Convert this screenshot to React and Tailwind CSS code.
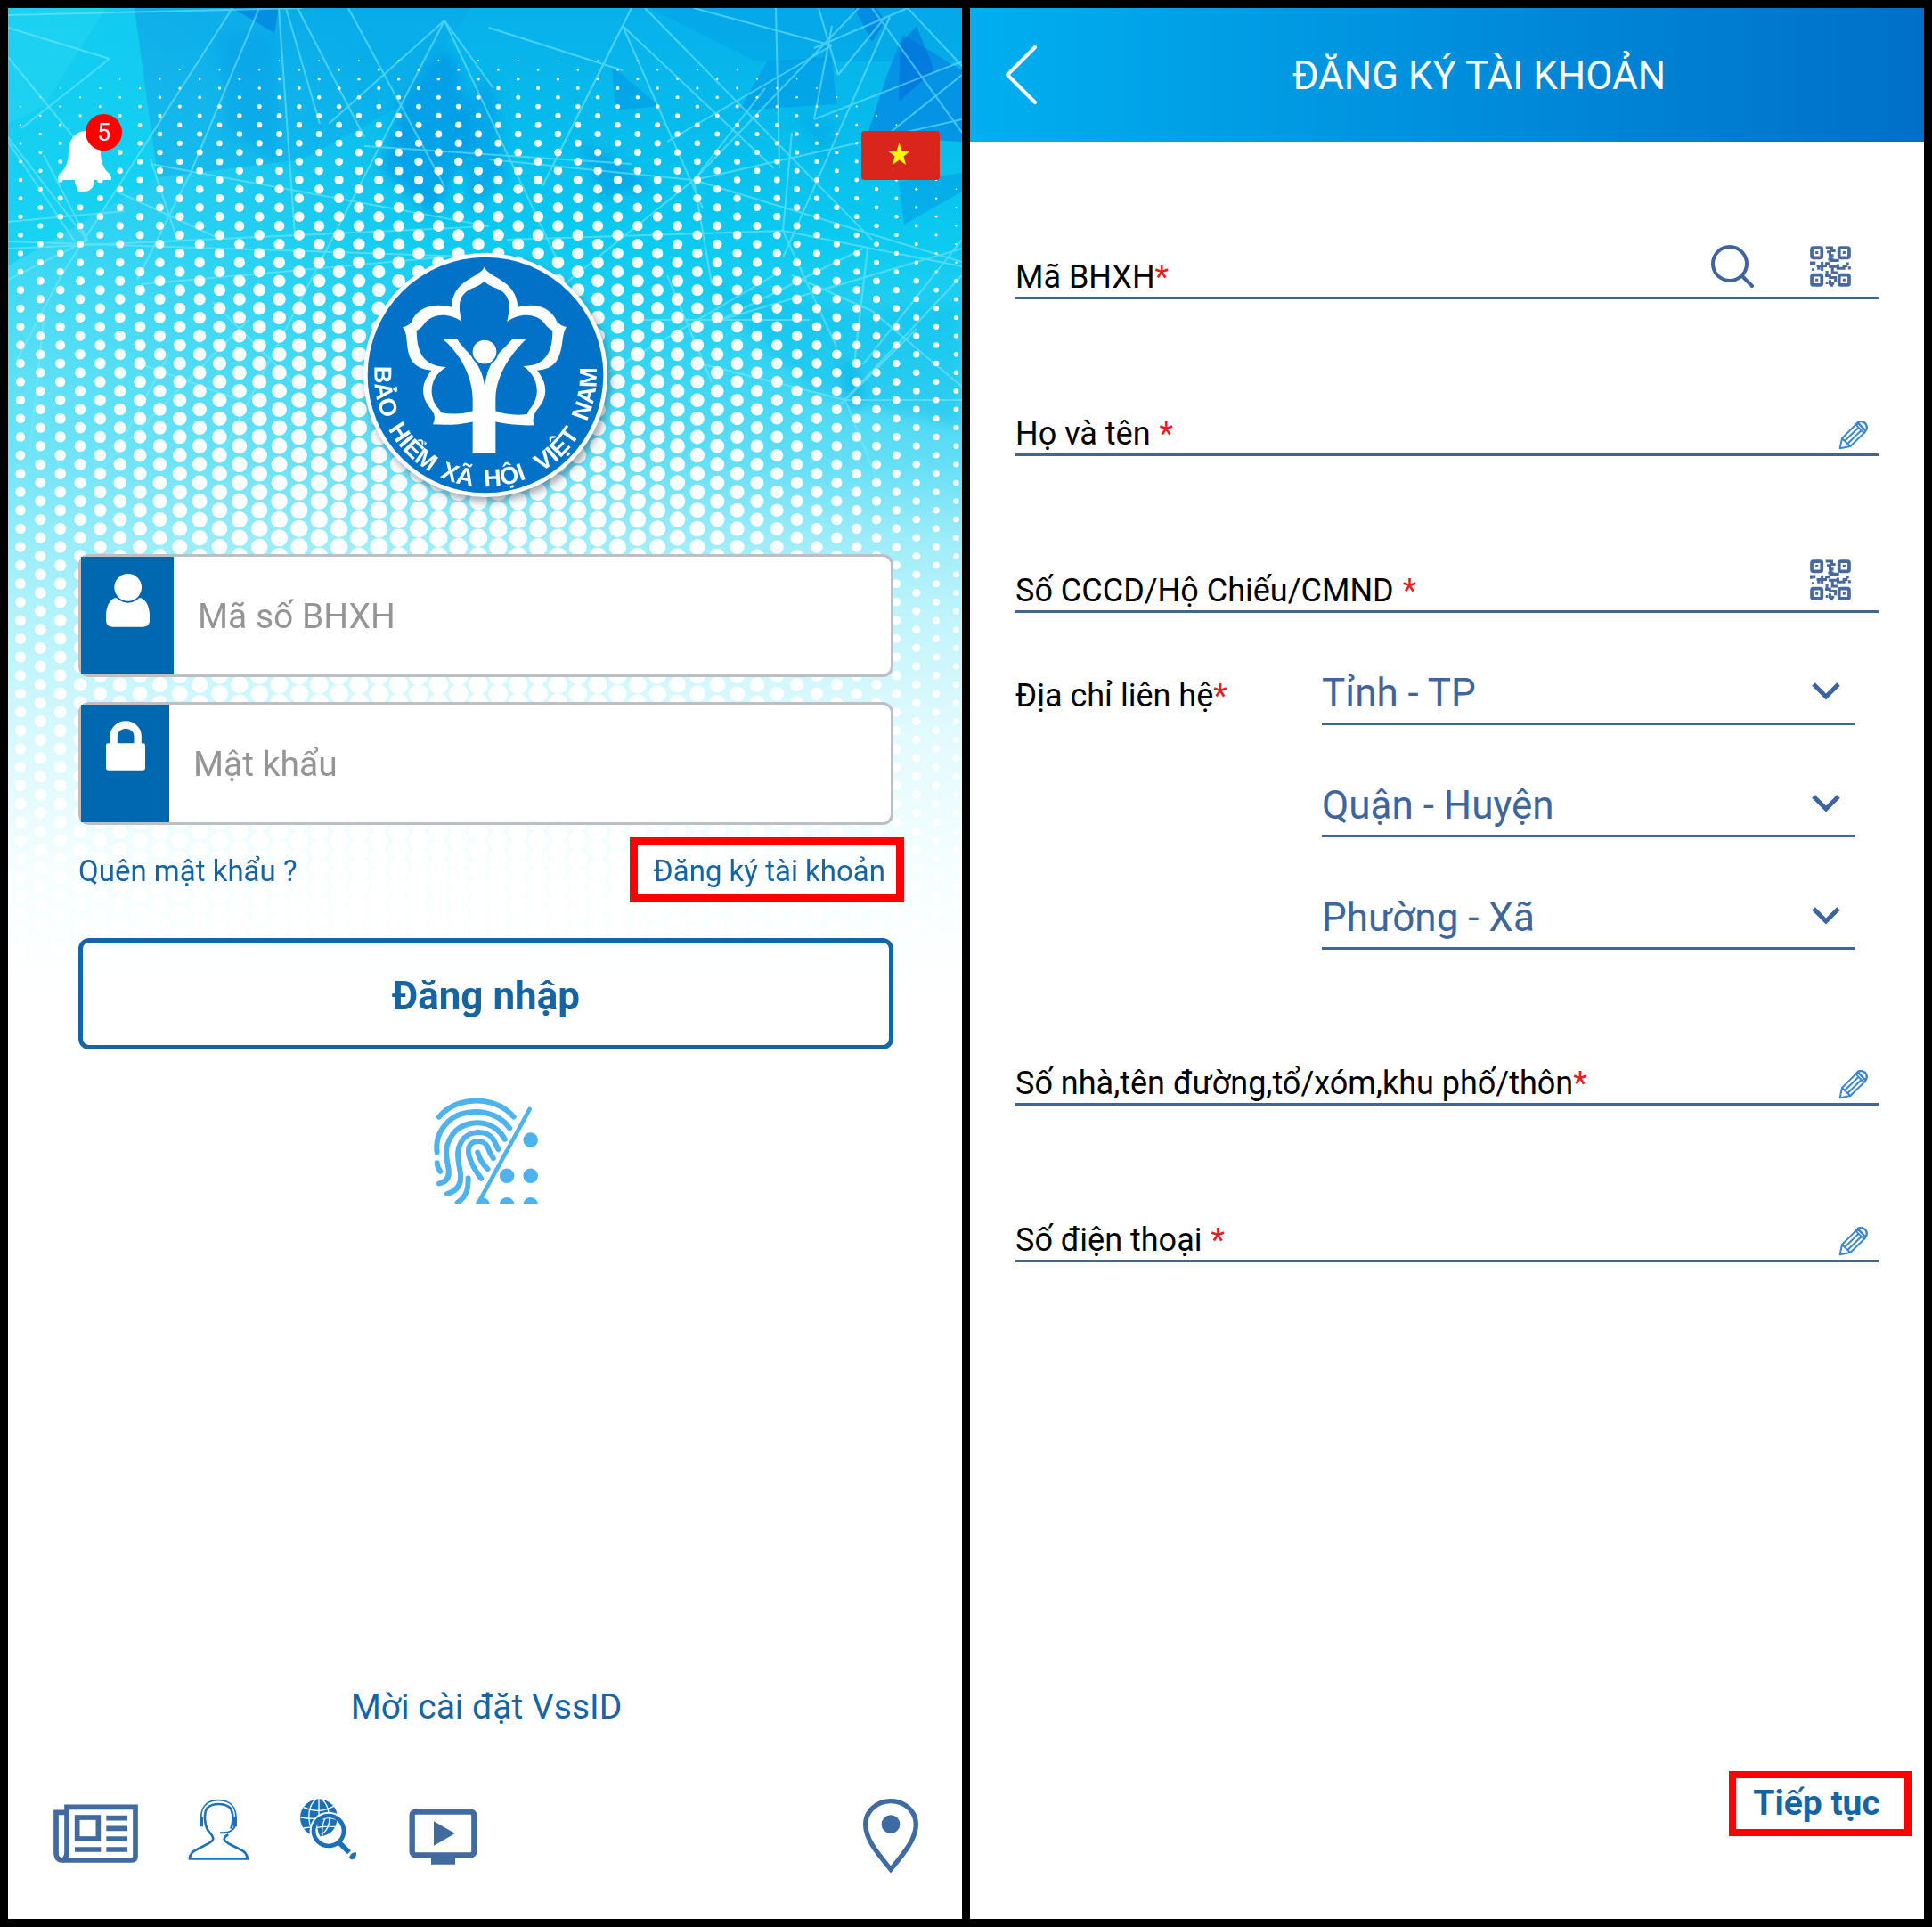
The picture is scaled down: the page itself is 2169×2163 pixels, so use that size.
const dotRadius = (x, y) => {
  const base = 11.6 * (1 - Math.exp(-(y - 36) / 260));
  const d = (x - 510) / 530;
  const side = d < 0 ? 0.5 : 0.62;
  return base * (1 - side * d * d) - 0.9 * d * d * (y < 300 ? 1 : 0);
};

const dots = [];
for (let c = 0; c < 48; c += 1) {
  for (let r = 0; r < 52; r += 1) {
    const x = 14 + c * 22.35;
    const y = 7.6 + r * 20.6 + (c % 2 ? -10.3 : 0);
    const radius = dotRadius(x, y);
    if (radius > 0.7) dots.push([x, y, Math.round(radius * 10) / 10]);
  }
}

const softShards = [
  ["485,45 505,60 520,150 478,235 418,180 443,100", "#0088e4", 0.5],
  ["536,75 545,90 560,190 520,230 505,120", "#0090e4", 0.45],
  ["235,25 299,28 304,170 248,140", "#0090e4", 0.35],
  ["640,150 685,170 724,200 668,215", "#0088e2", 0.4],
  ["880,110 930,130 920,180", "#009ae6", 0.35],
  ["932,395 952,400 964,440 945,455", "#00a8e4", 0.5],
  ["780,310 960,340 1071,330 1071,470 900,430", "#00b8ea", 0.35],
];

const shards = [
  ["0,0 142,0 168,190 0,290", "#10d2f1", 0.75],
  ["0,0 110,0 40,110 0,130", "#2ad8f2", 0.45],
  ["142,0 520,0 440,110 330,170 168,190", "#0aa6e8", 0.4],
  ["252,0 304,0 299,28", "#0082e0", 0.7],
  ["678,65 731,110 682,115", "#008ae2", 0.4],
  ["852,60 925,55 930,108 821,115", "#008ee6", 0.45],
  ["720,0 1071,0 1071,60 840,60", "#0098e6", 0.35],
  ["950,0 975,0 985,15 970,38", "#0070dc", 0.5],
  ["1005,30 1071,70 1071,150 964,144 988,72", "#0480e2", 0.65],
  ["1002,40 1020,20 1040,70 1000,105", "#0068d8", 0.5],
  ["1000,195 1071,185 1071,206 1006,243", "#0098e4", 0.5],
];

const rays = [
  [0, 22, 114, 57], [114, 57, 15, 135], [0, 55, 82, 155], [0, 8, 330, 0], [0, 150, 75, 262], [0, 145, 90, 262],
  [252, 0, 60, 300], [60, 300, 10, 395], [282, 0, 205, 185], [205, 185, 145, 305], [304, 0, 322, 255], [312, 0, 350, 130],
  [325, 0, 400, 145], [382, 0, 490, 200], [490, 14, 360, 130], [490, 14, 240, 500], [490, 14, 545, 90], [490, 14, 620, 290],
  [0, 270, 540, 245], [0, 262, 550, 280], [0, 305, 90, 260], [150, 310, 540, 275], [160, 175, 540, 245], [120, 205, 240, 260],
  [160, 170, 190, 260], [0, 240, 130, 228], [40, 165, 90, 262], [400, 155, 700, 175], [540, 22, 690, 70], [690, 20, 600, 200],
  [690, 20, 780, 225], [690, 20, 860, 180], [715, 0, 970, 260], [700, 0, 620, 160], [770, 0, 925, 42], [925, 42, 740, 150],
  [862, 0, 866, 180], [910, 0, 932, 75], [932, 75, 985, 10], [990, 10, 870, 280], [925, 20, 905, 125], [1010, 0, 905, 45],
  [1010, 0, 1071, 65], [970, 0, 1071, 140], [905, 125, 1071, 60], [1071, 75, 990, 140], [770, 193, 540, 170], [770, 193, 600, 330],
  [770, 193, 1071, 285], [770, 193, 955, 0], [770, 193, 790, 310], [770, 193, 1071, 125], [770, 193, 850, 90], [560, 260, 870, 250],
  [870, 250, 930, 380], [870, 250, 1071, 290], [880, 140, 870, 250], [960, 270, 800, 350], [965, 270, 950, 400], [1071, 260, 960, 400],
  [1071, 300, 930, 450], [800, 350, 1071, 270], [880, 300, 970, 340], [970, 340, 1071, 425], [1020, 360, 940, 440], [940, 440, 1071, 440],
  [780, 400, 940, 440], [740, 300, 790, 420], [620, 440, 860, 300], [700, 350, 900, 350], [940, 440, 980, 540], [180, 390, 120, 500],
  [230, 330, 320, 420], [150, 400, 260, 440], [270, 350, 60, 560], [40, 350, 20, 540],
];

function Backdrop() {
  return (
    <svg className="absolute inset-x-0 top-0 h-auto w-full" viewBox="0 0 1071 1100" aria-hidden="true">
      <defs>
        <linearGradient id="sky" x1="0" y1="0" x2="0" y2="1">
          <stop offset="0" stopColor="#08b0ea" />
          <stop offset="0.12" stopColor="#06bcec" />
          <stop offset="0.24" stopColor="#0ccaf0" />
          <stop offset="0.36" stopColor="#34d4f2" />
          <stop offset="0.46" stopColor="#62def5" />
          <stop offset="0.54" stopColor="#9cecf9" />
          <stop offset="0.62" stopColor="#c0f4fc" />
          <stop offset="0.74" stopColor="#e2fafe" />
          <stop offset="0.88" stopColor="#f6feff" />
          <stop offset="1" stopColor="#ffffff" />
        </linearGradient>
        <radialGradient id="glow" cx="0" cy="0.38" r="0.5">
          <stop offset="0" stopColor="#8aeefa" stopOpacity="0.45" />
          <stop offset="1" stopColor="#8aeefa" stopOpacity="0" />
        </radialGradient>
        <filter id="soften">
          <feGaussianBlur stdDeviation="7" />
        </filter>
      </defs>
      <rect width="1071" height="1100" fill="url(#sky)" />
      <rect width="1071" height="1100" fill="url(#glow)" />
      <g filter="url(#soften)">
        {softShards.map(([points, fill, opacity]) => (
          <polygon key={points} points={points} fill={fill} opacity={opacity} />
        ))}
      </g>
      {shards.map(([points, fill, opacity]) => (
        <polygon key={points} points={points} fill={fill} opacity={opacity} />
      ))}
      <g stroke="#7cecfc" strokeWidth="2" opacity="0.55">
        {rays.map(([x1, y1, x2, y2], i) => (
          <line key={i} x1={x1} y1={y1} x2={x2} y2={y2} />
        ))}
      </g>
      <g fill="#ffffff" opacity="0.95">
        {dots.map(([x, y, r], i) => (
          <circle key={i} cx={x} cy={y} r={r} />
        ))}
      </g>
    </svg>
  );
}

const mottoWords = [
  ["BẢO", "9.6%"],
  ["HIỂM", "27.3%"],
  ["XÃ", "42.3%"],
  ["HỘI", "55.3%"],
  ["VIỆT", "72%"],
  ["NAM", "89.8%"],
];

function Emblem() {
  return (
    <svg
      className="relative mx-auto mt-[67px] size-[276px] drop-shadow-[3px_5px_4px_rgba(60,60,80,0.45)]"
      viewBox="54 67 828 828"
      role="img"
      aria-label="Bảo hiểm xã hội Việt Nam"
    >
      <circle cx="468" cy="481" r="411" fill="#fff" />
      <circle cx="468" cy="481" r="397" fill="#0272c8" />
      <path
        fill="#fff"
        d="M464 117C476 152 574 160 577 252C625 238 688 246 710 303Q724 316 741 320C722 346 734 392 706 436Q684 463 642 465C672 502 686 550 640 600Q624 622 631 650Q560 652 500 638L464 620L428 638Q368 652 291 647Q304 622 288 600C242 550 256 502 286 465Q244 463 222 436C194 392 212 346 189 320Q208 316 218 303C240 246 303 238 355 252C354 160 452 152 464 117Z"
      />
      <path
        fill="#0272c8"
        d="M464 165Q478 180 508 190C562 215 548 262 541 301C590 266 648 276 671 312Q680 324 694 332C694 372 690 452 595 451C650 488 652 552 622 590Q612 600 609 613Q550 620 502 602L464 590L425 602Q380 618 319 608Q316 600 306 590C276 552 278 488 336 454C238 452 238 372 236 332Q250 324 259 312C282 276 338 266 387 300C380 262 368 215 420 190Q450 180 464 165Z"
      />
      <path
        fill="#fff"
        d="M325 360L372 358C392 398 456 430 466 522C474 430 520 406 560 359L605 360C566 398 504 470 502 560V745H425V560C424 480 378 404 325 360Z"
      />
      <circle cx="465" cy="403" r="46" fill="#0272c8" />
      <circle cx="465" cy="403" r="40" fill="#fff" />
      <path id="motto" fill="none" d="M100 416A374 374 0 1 0 836 416" />
      {mottoWords.map(([word, offset]) => (
        <text key={word} className="font-['Liberation_Sans'] font-bold" fontSize="82" fill="#fff" textAnchor="middle">
          <textPath href="#motto" startOffset={offset}>
            {word}
          </textPath>
        </text>
      ))}
    </svg>
  );
}

function BellIcon() {
  return (
    <svg className="mt-[18px] h-[68px] w-[60px]" viewBox="0 0 60 68" fill="#fff" aria-hidden="true">
      <path d="M30 0C18 1 12 12 12 22C12 38 7 44 2 48Q0 50 0 55H19C19 63 24 68 30 68C36 68 41 63 41 55H60Q60 50 58 48C53 44 48 38 48 22C48 12 42 1 30 0Z" />
    </svg>
  );
}

function FlagIcon() {
  return (
    <svg className="mt-1 h-[55px] w-[88px]" viewBox="0 0 88 55" aria-hidden="true">
      <rect width="88" height="55" rx="4" fill="#da251d" />
      <path fill="#ff0" d="M42.500 13L45.500 22.500H55L47.500 28.500L50 38L42.500 32.500L35 38L37.500 28.500L30 22.500H39.500Z" />
    </svg>
  );
}

function UserIcon() {
  return (
    <svg className="h-[61px] w-[51px]" viewBox="174 130 153 183" fill="#fff" aria-hidden="true">
      <path d="M177 272C178 246 188 222 206 215H295C313 222 323 246 324 272V290Q324 312 302 312H199Q177 312 177 290Z" />
      <circle cx="251" cy="180" r="51" fill="#0068b0" />
      <circle cx="251" cy="179" r="46" />
    </svg>
  );
}

function LockIcon() {
  return (
    <svg className="h-14 w-[46px]" viewBox="174 628 138 168" aria-hidden="true">
      <rect x="177" y="704" width="132" height="91" rx="7" fill="#fff" />
      <path d="M203 710V680A40 38 0 0 1 284 680V710" fill="none" stroke="#fff" strokeWidth="25" />
    </svg>
  );
}

function FingerprintIcon() {
  return (
    <svg className="h-[119px] w-[118px]" viewBox="80 66 355 356" fill="none" stroke="#4eb3ec" strokeWidth="18" strokeLinecap="round" aria-hidden="true">
      <path d="M98 130C155 60 285 55 350 130" />
      <path d="M91 250C82 185 130 114 218 113C275 112 315 138 336 168" />
      <path d="M98 355C126 350 133 332 130 308C124 268 114 238 136 202C164 148 240 134 290 170Q310 186 320 206" />
      <path d="M125 390C162 380 174 355 170 320C164 282 154 252 170 220C192 172 262 172 282 208L298 240" />
      <path d="M240 338C218 308 197 275 197 243C199 206 248 204 261 230Q270 254 281 270" />
      <path d="M228 250Q240 286 262 306" />
      <path d="M91 285Q92 302 102 314" />
      <path d="M196 337C198 372 190 402 160 420" />
      <path d="M404 104L232 418" strokeWidth="14" />
      <g fill="#4eb3ec" stroke="none">
        <circle cx="407" cy="208" r="25" />
        <circle cx="327" cy="329" r="25" />
        <circle cx="407" cy="329" r="25" />
        <circle cx="245" cy="427" r="24" />
        <circle cx="327" cy="427" r="25" />
        <circle cx="407" cy="427" r="25" />
      </g>
    </svg>
  );
}

function NewsIcon() {
  return (
    <svg className="h-[84px] w-[95px]" viewBox="60 84 285 252" fill="none" stroke="#416a9f" strokeWidth="17" aria-hidden="true">
      <path d="M105 115H336V282Q336 294 322 294H90Q105 290 105 270Z" />
      <path d="M105 133H69V272Q70 294 90 294Q105 290 105 270" />
      <rect x="140" y="150" width="71" height="72" />
      <path d="M238 152H309M238 187H309M238 222H309M238 258H309M132 258H220" />
    </svg>
  );
}

function SupportIcon() {
  return (
    <svg className="h-[84px] w-[69px]" viewBox="510 84 207 252" fill="none" stroke="#1d73b9" strokeWidth="8" aria-hidden="true">
      <path d="M655 188C664 165 664 135 652 118Q638 105 613 105Q588 105 575 118C562 135 565 180 582 200Q594 212 595 222C593 236 560 246 540 258Q516 268 516 289H710Q710 268 686 258C666 246 636 238 632 224Q633 214 646 208" />
      <path d="M554 152C554 110 578 92 613 92C648 92 672 110 672 152" strokeWidth="5" />
      <path d="M555 148V181M669 148V181" strokeWidth="12" />
      <path d="M669 178C662 196 648 203 618 202" strokeWidth="6" />
    </svg>
  );
}

function GlobeSearchIcon() {
  return (
    <svg className="h-[84px] w-[67px]" viewBox="888 84 201 252" fill="none" aria-hidden="true">
      <circle cx="954" cy="151" r="63" fill="#1a6fb9" />
      <g stroke="#fff" strokeWidth="4">
        <path d="M954 88V214M892 150Q954 162 1016 140M903 116Q954 140 1004 112M902 186Q950 178 1000 190" />
        <path d="M944 88C910 120 914 184 948 214M964 88C998 120 994 184 960 214" />
      </g>
      <circle cx="987" cy="195" r="64" fill="#fff" />
      <path d="M950 165Q980 145 1015 160C1012 190 990 212 958 214Q945 190 950 165Z" fill="#1a6fb9" />
      <path d="M948 184Q980 178 1014 182M962 208Q990 190 990 152M975 152Q962 180 966 212" stroke="#fff" strokeWidth="4" />
      <circle cx="987" cy="195" r="51" stroke="#1a6fb9" strokeWidth="14" />
      <path d="M1021 233L1056 268" stroke="#1a6fb9" strokeWidth="17" />
      <path d="M1057 281Q1066 266 1080 268Q1082 290 1066 292Q1056 290 1057 281Z" fill="#1a6fb9" />
    </svg>
  );
}

function VideoIcon() {
  return (
    <svg className="h-[84px] w-[77px]" viewBox="1263 84 231 252" aria-hidden="true">
      <rect x="1274" y="131" width="209" height="146" rx="12" fill="none" stroke="#416a9f" strokeWidth="19" />
      <path fill="#416a9f" d="M1338 280H1419V308H1338ZM1347 163L1418 204L1347 245Z" />
    </svg>
  );
}

function PinIcon() {
  return (
    <svg className="h-[84px] w-16" viewBox="84 84 192 252" aria-hidden="true">
      <path d="M180 325C140 276 95 226 95 173A85 78 0 0 1 265 173C265 226 220 276 180 325Z" fill="none" stroke="#3f6ba5" strokeWidth="16" />
      <circle cx="180" cy="173" r="31" fill="#3f6ba5" />
    </svg>
  );
}

function SearchIcon() {
  return (
    <svg className="size-12" viewBox="0 0 48 48" fill="none" stroke="#41659a" strokeWidth="4" strokeLinecap="round" aria-hidden="true">
      <circle cx="21" cy="21" r="19" />
      <path d="M35 35L46 46" />
    </svg>
  );
}

function QrIcon() {
  return (
    <svg className="size-[46px]" viewBox="0 0 135 135" fill="none" stroke="#47699c" strokeWidth="11" aria-hidden="true">
      <rect x="6" y="6" width="33" height="33" rx="5" />
      <rect x="96" y="6" width="33" height="33" rx="5" />
      <rect x="6" y="96" width="33" height="33" rx="5" />
      <rect x="96" y="96" width="33" height="33" rx="5" />
      <path strokeWidth="9" d="M18 22H27M108 22H117M18 112H27M108 112H117" />
      <path strokeWidth="9" d="M52 6H72V16H84M56 20H66V32H78M68 32V48H96M60 44H78M4 64V56H14V62M22 66H56M40 52V82M50 58H66M10 74V82M24 74H34M62 68H92M92 60V74H112V66H124M124 54V62M130 68V78M74 70V88H92M56 82V98H70M50 98H58M62 104H84V118M66 112V124H80M52 122H60M72 124V134M84 100V108" />
    </svg>
  );
}

function PencilIcon() {
  return (
    <svg className="size-[33px]" viewBox="555 666 99 99" fill="none" stroke="#3b86cf" strokeWidth="7" strokeLinejoin="round" aria-hidden="true">
      <path d="M560 760L567 726L613 680L641 708L595 753ZM567 726L595 753M576 735L622 690M586 744L632 699" strokeWidth="6" />
      <path d="M613 680L622 671Q634 666 645 675Q654 686 648 698L641 708M620 673L646 700" />
    </svg>
  );
}

const navItems = [
  ["Tin tức", NewsIcon],
  ["Hỗ trợ", SupportIcon],
  ["Tra cứu", GlobeSearchIcon],
  ["Video", VideoIcon],
];

function LoginField({ id, label, type, icon, cell }) {
  return (
    <div className="flex h-[138px] rounded-xl border-[3px] border-[#bcc0c4] bg-white">
      <label htmlFor={id} aria-label={label} className={`flex justify-center bg-[#0068b0] pt-[18px] ${cell}`}>
        {icon}
      </label>
      <input
        id={id}
        type={type}
        placeholder={label}
        className="min-w-0 flex-1 rounded-xl bg-transparent px-[27px] pt-0.5 text-[39px] text-[#333] outline-none placeholder:text-[#959595]"
      />
    </div>
  );
}

function LoginScreen() {
  return (
    <section className="relative flex flex-col overflow-hidden bg-white">
      <Backdrop />
      <header className="relative flex items-start justify-between pt-[119px] pr-[25px] pl-14">
        <button type="button" aria-label="Thông báo" className="relative h-[88px] w-[72px]">
          <BellIcon />
          <span className="absolute top-0 right-0 flex size-[41px] items-center justify-center rounded-full bg-[#ff0000] pt-0.5 text-[27px] text-white">
            5
          </span>
        </button>
        <button type="button" aria-label="Tiếng Việt" className="pt-[15px]">
          <FlagIcon />
        </button>
      </header>
      <Emblem />
      <form className="relative mt-[63px] flex flex-col pr-[77px] pl-[79px]" onSubmit={(e) => e.preventDefault()}>
        <div className="flex flex-col gap-7">
          <LoginField id="bhxh" label="Mã số BHXH" type="text" icon={<UserIcon />} cell="w-[104px]" />
          <LoginField id="password" label="Mật khẩu" type="password" icon={<LockIcon />} cell="w-[99px]" />
        </div>
        <div className="mt-[13px] -mr-3 flex items-center justify-between text-[33px] text-[#1565a5]">
          <a href="#forgot" className="pt-1">
            Quên mật khẩu ?
          </a>
          <a href="#register" className="flex h-[74px] items-center border-[9px] border-[#ff0000] bg-white/50 pt-1 pr-3 pl-[18px]">
            Đăng ký tài khoản
          </a>
        </div>
        <button type="submit" className="mt-10 h-[125px] rounded-xl border-[5px] border-[#1565a5] bg-white/60 pt-1 text-[44px] font-bold text-[#1565a5]">
          Đăng nhập
        </button>
        <button type="button" aria-label="Đăng nhập bằng vân tay" className="mx-auto mt-[54px]">
          <FingerprintIcon />
        </button>
      </form>
      <footer className="relative mt-auto pr-12 pb-[52px] pl-[51px]">
        <p className="text-center text-[39px] leading-[48px] text-[#1565a5]">
          <a href="#install">Mời cài đặt VssID</a>
        </p>
        <nav className="mt-[78px] flex items-center gap-14">
          {navItems.map(([name, Icon]) => (
            <a key={name} href="#menu" aria-label={name}>
              <Icon />
            </a>
          ))}
          <a href="#map" aria-label="Bản đồ" className="ml-auto">
            <PinIcon />
          </a>
        </nav>
      </footer>
    </section>
  );
}

function FormRow({ id, label, spaced, children }) {
  return (
    <div className="flex h-16 items-end border-b-[3px] border-[#41668f]">
      <label htmlFor={id} className="pb-px text-[36px] leading-[42px] text-black">
        {label}
        <span className={spaced ? "ml-2.5 text-[#e81c24]" : "text-[#e81c24]"}>*</span>
      </label>
      <input id={id} type="text" className="h-11 min-w-0 flex-1 bg-transparent px-3 text-[36px] outline-none" />
      {children}
    </div>
  );
}

function EditButton() {
  return (
    <button type="button" aria-label="Sửa" className="mr-3 mb-1">
      <PencilIcon />
    </button>
  );
}

function QrButton() {
  return (
    <button type="button" aria-label="Quét mã QR" className="mr-[31px] mb-[11px]">
      <QrIcon />
    </button>
  );
}

function RegisterScreen() {
  return (
    <section className="flex flex-col bg-white">
      <header className="grid h-[150px] grid-cols-[112px_1fr_40px] items-center bg-linear-to-r from-[#00aff0] to-[#006fc8]">
        <button type="button" aria-label="Quay lại" className="pl-10">
          <svg className="h-[66px] w-[35px]" viewBox="0 0 35 66" fill="none" stroke="#fff" strokeWidth="4" strokeLinecap="round" aria-hidden="true">
            <path d="M33 2L2 33L33 64" />
          </svg>
        </button>
        <h1 className="pt-0.5 text-center text-[44px] text-white">ĐĂNG KÝ TÀI KHOẢN</h1>
      </header>
      <form className="flex flex-1 flex-col pb-[93px]" onSubmit={(e) => e.preventDefault()}>
        <div className="flex flex-col gap-28 px-[51px] pt-[113px]">
          <FormRow id="code" label="Mã BHXH">
            <button type="button" aria-label="Tìm kiếm" className="mr-[63px] mb-2.5">
              <SearchIcon />
            </button>
            <QrButton />
          </FormRow>
          <FormRow id="name" label="Họ và tên" spaced>
            <EditButton />
          </FormRow>
          <FormRow id="cccd" label="Số CCCD/Hộ Chiếu/CMND" spaced>
            <QrButton />
          </FormRow>
        </div>
        <div className="mt-14 grid grid-cols-[344px_1fr] pr-[77px] pl-[51px]">
          <p className="text-[36px] leading-[74px] text-black">
            Địa chỉ liên hệ<span className="text-[#e81c24]">*</span>
          </p>
          <div className="flex flex-col gap-14">
            {["Tỉnh - TP", "Quận - Huyện", "Phường - Xã"].map((name) => (
              <div key={name} className="relative">
                <select
                  aria-label={name}
                  className="block h-[70px] w-full appearance-none border-b-[3px] border-[#41668f] bg-transparent text-[44px] text-[#3e669c] outline-none"
                >
                  <option>{name}</option>
                </select>
                <svg
                  className="pointer-events-none absolute top-[22px] right-[17px] h-5 w-8"
                  viewBox="0 0 32 20"
                  fill="none"
                  stroke="#3b64a0"
                  strokeWidth="5"
                  aria-hidden="true"
                >
                  <path d="M2 2L16 16L30 2" />
                </svg>
              </div>
            ))}
          </div>
        </div>
        <div className="mt-[111px] flex flex-col gap-28 px-[51px]">
          <FormRow id="street" label="Số nhà,tên đường,tổ/xóm,khu phố/thôn">
            <EditButton />
          </FormRow>
          <FormRow id="phone" label="Số điện thoại" spaced>
            <EditButton />
          </FormRow>
        </div>
        <button
          type="submit"
          className="mt-auto mr-3.5 flex h-[73px] w-[205px] items-center justify-center self-end border-8 border-[#ff0000] pr-2 text-[39px] font-bold text-[#1565a5]"
        >
          Tiếp tục
        </button>
      </form>
    </section>
  );
}

export default function App() {
  return (
    <main className="grid min-h-screen grid-cols-2 gap-[9px] bg-black p-[9px] font-['Roboto',sans-serif]">
      <LoginScreen />
      <RegisterScreen />
    </main>
  );
}
